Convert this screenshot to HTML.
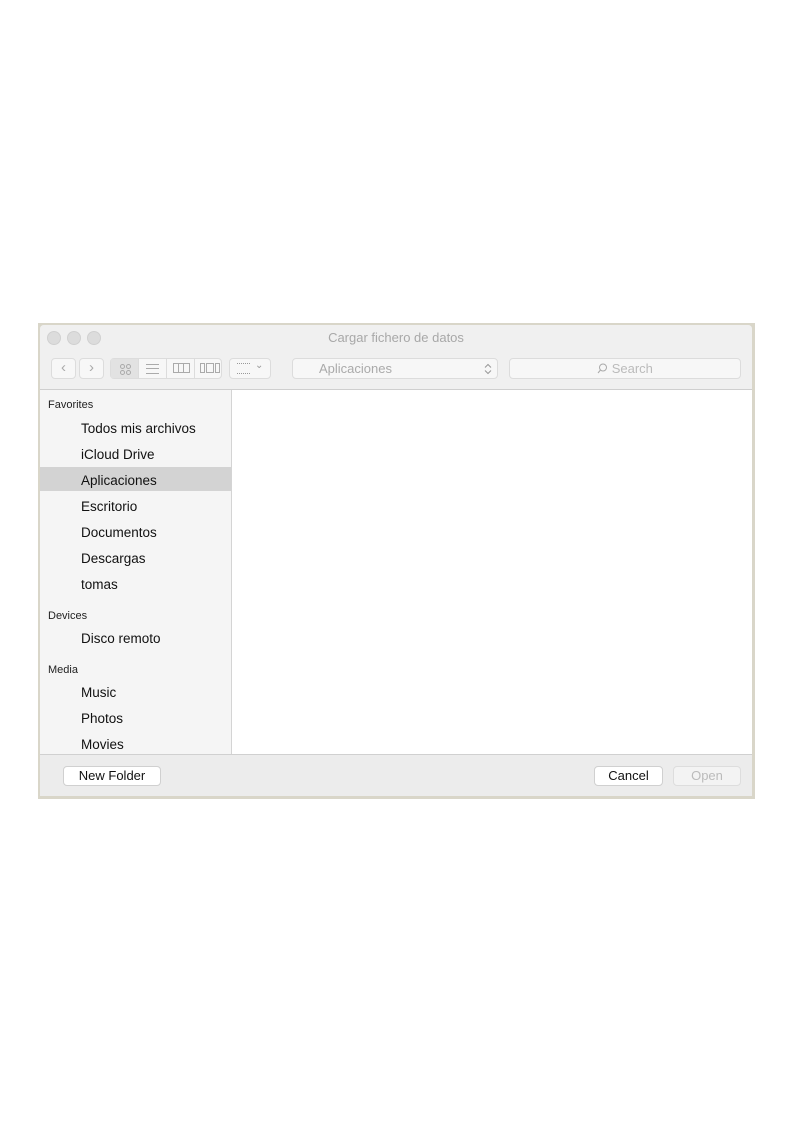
<!DOCTYPE html>
<html><head><style>
body{margin:0;width:794px;height:1123px;background:#fff;position:relative;font-family:"Liberation Sans",sans-serif;overflow:hidden}
.frame{position:absolute;left:38px;top:323px;width:717px;height:476px;background:#d9d6c9}
.win{position:absolute;left:40px;top:325px;width:712px;height:471px;background:#ececec;border-radius:4px 4px 0 0;overflow:hidden}
.top{position:absolute;left:0;top:0;width:712px;height:64px;background:#f0f0f0;border-bottom:1px solid #cfcfcf}
.dot{position:absolute;top:6px;width:12px;height:12px;border-radius:50%;background:#dcdcdc;border:1px solid #d0d0d0}
.title{position:absolute;top:5px;left:0;width:712px;text-align:center;font-size:13px;color:#a8a8a8}
.btn{position:absolute;top:33px;height:21px;border:1px solid #dcdcdc;border-radius:4px;background:#f7f7f7;box-sizing:border-box;color:#aaa;font-size:13px}
.side{position:absolute;left:0;top:65px;width:191px;height:364px;background:#f5f5f5;border-right:1px solid #d4d4d4}
.main{position:absolute;left:192px;top:65px;width:520px;height:364px;background:#fff}
.h{position:absolute;left:8px;font-size:11px;color:#222}
.it{position:absolute;left:41px;font-size:13.5px;color:#111}
.sel{position:absolute;left:0;top:77px;width:191px;height:24px;background:#d3d3d3}
.bottom{position:absolute;left:0;top:429px;width:712px;height:42px;background:#ececec;border-top:1px solid #d0d0d0}
.pb{position:absolute;top:11px;height:20px;background:#fff;border:1px solid #d0d0d0;border-radius:4px;box-sizing:border-box;font-size:13px;text-align:center;line-height:18px;color:#111}
</style></head><body>
<div class="frame"></div>
<div class="win">
<div class="top">
<div class="dot" style="left:7px"></div><div class="dot" style="left:27px"></div><div class="dot" style="left:47px"></div>
<div class="title">Cargar fichero de datos</div>
<div class="btn" style="left:11px;width:25px;text-align:center;line-height:17px;font-size:15px">‹</div>
<div class="btn" style="left:39px;width:25px;text-align:center;line-height:17px;font-size:15px">›</div>
<div class="btn" style="left:70px;width:112px;background:#f7f7f7"></div>
<div style="position:absolute;left:71px;top:34px;width:27px;height:19px;background:#e2e2e2"></div>
<div style="position:absolute;left:80px;top:39px;width:3px;height:3px;border:1px solid #aaa;border-radius:50%"></div>
<div style="position:absolute;left:86px;top:39px;width:3px;height:3px;border:1px solid #aaa;border-radius:50%"></div>
<div style="position:absolute;left:80px;top:45px;width:3px;height:3px;border:1px solid #aaa;border-radius:50%"></div>
<div style="position:absolute;left:86px;top:45px;width:3px;height:3px;border:1px solid #aaa;border-radius:50%"></div>
<div style="position:absolute;left:98px;top:34px;width:1px;height:19px;background:#dcdcdc"></div>
<div style="position:absolute;left:126px;top:34px;width:1px;height:19px;background:#dcdcdc"></div>
<div style="position:absolute;left:154px;top:34px;width:1px;height:19px;background:#dcdcdc"></div>
<div style="position:absolute;left:106px;top:39px;width:13px;height:8px;border-top:1px solid #aaa;border-bottom:1px solid #aaa"></div>
<div style="position:absolute;left:106px;top:43px;width:13px;height:1px;background:#aaa"></div>
<div style="position:absolute;left:133px;top:38px;width:15px;height:8px;border:1px solid #aaa"></div>
<div style="position:absolute;left:138px;top:38px;width:1px;height:10px;background:#aaa"></div>
<div style="position:absolute;left:143px;top:38px;width:1px;height:10px;background:#aaa"></div>
<div style="position:absolute;left:160px;top:38px;width:3px;height:8px;border:1px solid #aaa"></div>
<div style="position:absolute;left:166px;top:38px;width:6px;height:8px;border:1px solid #aaa"></div>
<div style="position:absolute;left:175px;top:38px;width:3px;height:8px;border:1px solid #aaa"></div>
<div class="btn" style="left:189px;width:42px"></div>
<div style="position:absolute;left:197px;top:38px;width:13px;height:9px;border-top:1px dotted #999;border-bottom:1px dotted #999"></div>
<div style="position:absolute;left:215px;top:35px;font-size:10px;color:#999">⌄</div>
<div class="btn" style="left:252px;width:206px;line-height:19px"><span style="position:absolute;left:26px">Aplicaciones</span>
<svg style="position:absolute;right:5px;top:4px" width="8" height="12"><path d="M1 4.5L4 1.5L7 4.5M1 7.5L4 10.5L7 7.5" fill="none" stroke="#999"/></svg></div>
<div class="btn" style="left:469px;width:232px;text-align:center;line-height:19px;color:#bbb">
<svg width="11" height="11" style="vertical-align:-1px"><circle cx="6" cy="4.5" r="3.5" fill="none" stroke="#aaa"/><path d="M3.5 7L1 10" stroke="#aaa"/></svg> Search</div>
</div>
<div class="side">
<div class="h" style="top:9px">Favorites</div>
<div class="sel"></div>
<div class="it" style="top:31px">Todos mis archivos</div>
<div class="it" style="top:57px">iCloud Drive</div>
<div class="it" style="top:83px">Aplicaciones</div>
<div class="it" style="top:109px">Escritorio</div>
<div class="it" style="top:135px">Documentos</div>
<div class="it" style="top:161px">Descargas</div>
<div class="it" style="top:187px">tomas</div>
<div class="h" style="top:220px">Devices</div>
<div class="it" style="top:241px">Disco remoto</div>
<div class="h" style="top:274px">Media</div>
<div class="it" style="top:295px">Music</div>
<div class="it" style="top:321px">Photos</div>
<div class="it" style="top:347px">Movies</div>
</div>
<div class="main"></div>
<div class="bottom">
<div class="pb" style="left:23px;width:98px">New Folder</div>
<div class="pb" style="left:554px;width:69px">Cancel</div>
<div class="pb" style="left:633px;width:68px;background:#f3f3f3;color:#bbb;border-color:#ddd">Open</div>
</div>
</div>
</body></html>
